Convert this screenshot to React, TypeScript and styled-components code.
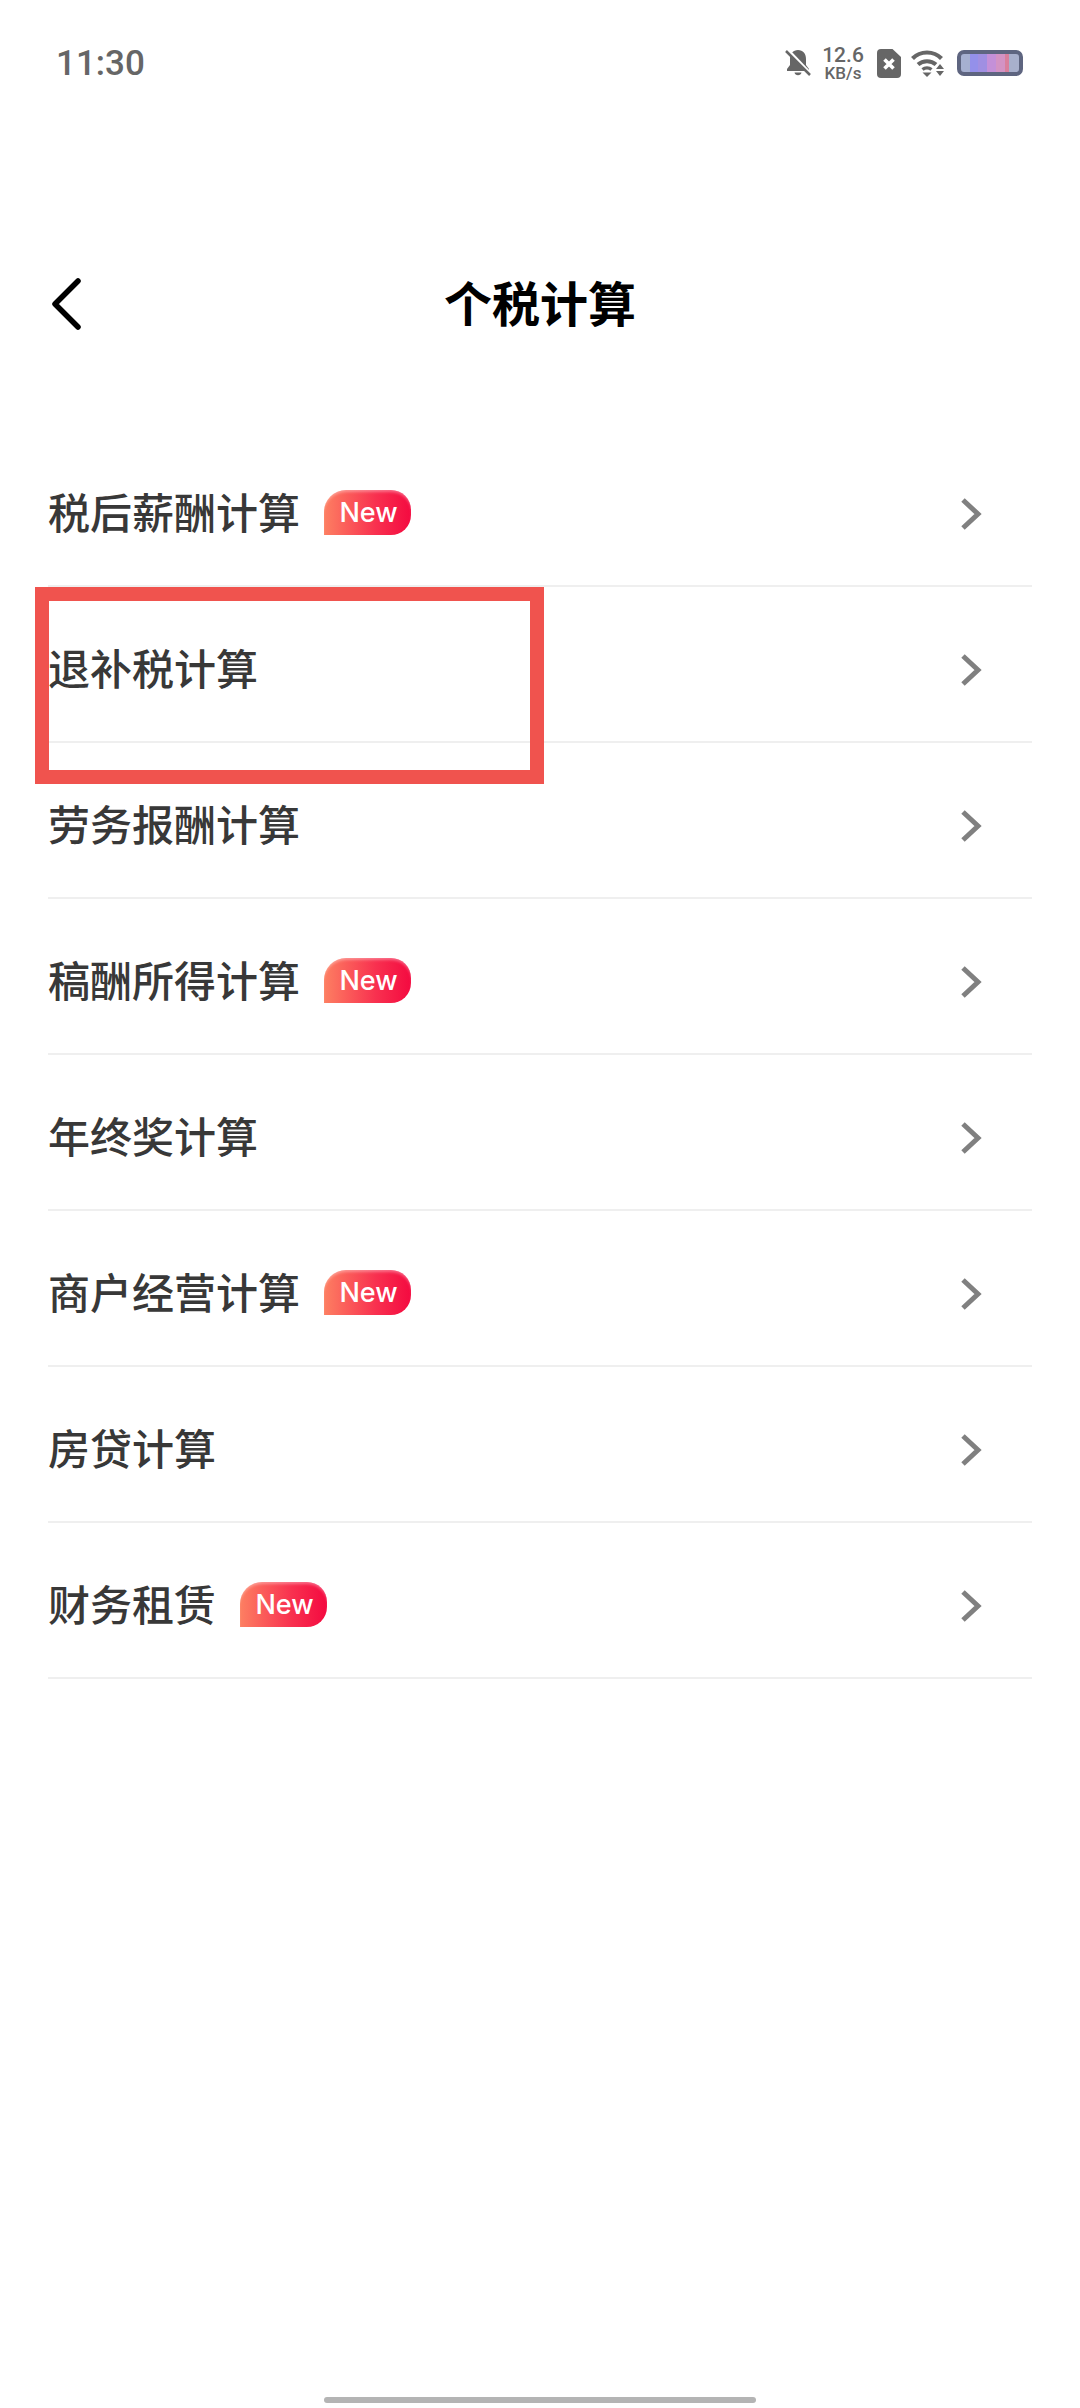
import styled, { createGlobalStyle } from 'styled-components';

const GlobalStyle = createGlobalStyle`
  html, body {
    margin: 0;
    padding: 0;
    background: #fff;
  }
  * {
    box-sizing: border-box;
  }
`;

const Page = styled.div`
  position: relative;
  width: 1080px;
  height: 2408px;
  overflow: hidden;
  background: #fff;
  font-family: 'Noto Sans CJK SC', 'Liberation Sans', sans-serif;
`;

const StatusBar = styled.div`
  height: 126px;
  padding: 0 57px 0 56px;
  display: flex;
  align-items: center;
  justify-content: space-between;
`;

const Time = styled.span`
  font-family: Roboto, sans-serif;
  font-weight: 500;
  font-size: 35px;
  color: #666;
`;

const StatusIcons = styled.div`
  display: flex;
  align-items: center;
  gap: 10px;
`;

const Speed = styled.div`
  display: flex;
  flex-direction: column;
  align-items: center;
  margin-right: 3px;
  font-family: Roboto, sans-serif;
  font-weight: 500;
  color: #666;
  width: 42px;
`;

const SpeedValue = styled.span`
  font-size: 21px;
  line-height: 19px;
`;

const SpeedUnit = styled.span`
  font-size: 17px;
  line-height: 16px;
  white-space: nowrap;
`;

const Battery = styled.div`
  width: 66px;
  height: 26px;
  margin-left: 2px;
  border: 4px solid #5e6580;
  border-radius: 7px;
  background: linear-gradient(
    90deg,
    #a6b0d0 0 15%,
    #9490ea 15% 30%,
    #a08fe2 30% 45%,
    #c490d8 45% 60%,
    #d393c4 60% 75%,
    #d97f9c 75% 83%,
    #a8b0cc 83% 100%
  );
`;

const NavBar = styled.div`
  position: relative;
  height: 116px;
  margin-top: 117px;
  display: flex;
  align-items: center;
  justify-content: center;
`;

const BackButton = styled.div`
  position: absolute;
  left: 50px;
  top: 50%;
  transform: translateY(-50%);
  margin-top: 3px;
  display: flex;
`;

const Title = styled.h1`
  margin: 0;
  font-size: 48px;
  line-height: 64px;
  font-weight: 700;
  color: #000;
`;

const List = styled.div`
  margin: 72px 48px 0;
`;

const Row = styled.div`
  height: 156px;
  padding: 6px 50px 0 0;
  display: flex;
  align-items: center;
  border-bottom: 2px solid #efefef;
`;

const RowLabel = styled.span`
  font-size: 42px;
  line-height: 56px;
  font-weight: 500;
  color: #383838;
`;

const NewBadge = styled.span`
  margin: 2px 0 0 24px;
  width: 87px;
  height: 45px;
  padding-left: 2px;
  display: flex;
  align-items: center;
  justify-content: center;
  border-radius: 22px 20px 20px 0;
  background: linear-gradient(90deg, #fd7f62 0%, #f8304f 60%, #f40a40 100%);
  color: #fff;
  font-family: Inter, sans-serif;
  font-size: 27px;
  font-weight: 500;
  box-shadow: inset 0 3px 3px -1px rgba(255, 255, 255, 0.35);
`;

const Chevron = styled.div`
  margin: 6px 0 0 auto;
  display: flex;
`;

const Highlight = styled.div`
  position: absolute;
  left: 35px;
  top: 587px;
  width: 509px;
  height: 197px;
  border: 14px solid #f0534e;
`;

const HomeIndicator = styled.div`
  position: absolute;
  left: 324px;
  bottom: 5px;
  width: 432px;
  height: 6px;
  border-radius: 3px;
  background: #b4b4b4;
`;

const items = [
  { label: '税后薪酬计算', isNew: true },
  { label: '退补税计算', isNew: false },
  { label: '劳务报酬计算', isNew: false },
  { label: '稿酬所得计算', isNew: true },
  { label: '年终奖计算', isNew: false },
  { label: '商户经营计算', isNew: true },
  { label: '房贷计算', isNew: false },
  { label: '财务租赁', isNew: true },
];

const BellOff = () => (
  <svg width="28" height="28" viewBox="0 0 26 28">
    <path
      d="M13 1c-5 0-8 3.500-8 9v6l-3 4v2h22v-2l-3-4v-6c0-5.500-3-9-8-9zM9.500 23.500a3.600 3.600 0 0 0 7 0z"
      fill="#666"
    />
    <path d="M2 0l24 25" stroke="#fff" strokeWidth="3" />
    <path d="M1 2l24 24" stroke="#666" strokeWidth="2.500" />
  </svg>
);

const SimError = () => (
  <svg width="24" height="29" viewBox="0 0 24 29">
    <path
      d="M4 0h11.500L24 8v17a4 4 0 0 1-4 4H4a4 4 0 0 1-4-4V4a4 4 0 0 1 4-4z"
      fill="#666"
    />
    <path d="M7.500 10.500l9 9M16.500 10.500l-9 9" stroke="#fff" strokeWidth="3.600" />
  </svg>
);

const Wifi = () => (
  <svg width="34" height="28" viewBox="0 0 34 28" fill="none">
    <path d="M1.500 9.500c8-8 21-8 29 0" stroke="#666" strokeWidth="4.200" />
    <path d="M7 15.500c5-4.500 13-4.500 18 0" stroke="#666" strokeWidth="4" />
    <path d="M11.500 20.500c2.500-2 6.500-2 9 0" stroke="#666" strokeWidth="3.400" />
    <path d="M11.500 23.500h9l-4.500 4.500z" fill="#666" />
    <path d="M29 15l4 5h-8zM25 22h8l-4 5z" fill="#666" />
  </svg>
);

const App = () => {
  return (
    <Page>
      <GlobalStyle />
      <StatusBar>
        <Time>11:30</Time>
        <StatusIcons>
          <BellOff />
          <Speed>
            <SpeedValue>12.6</SpeedValue>
            <SpeedUnit>KB/s</SpeedUnit>
          </Speed>
          <SimError />
          <Wifi />
          <Battery />
        </StatusIcons>
      </StatusBar>

      <NavBar>
        <BackButton>
          <svg width="32" height="52" viewBox="0 0 32 52" fill="none">
            <path
              d="M28 3L5 26l23 23"
              stroke="#000"
              strokeWidth="5.500"
              strokeLinecap="round"
              strokeLinejoin="round"
            />
          </svg>
        </BackButton>
        <Title>个税计算</Title>
      </NavBar>

      <List>
        {items.map((item) => (
          <Row key={item.label}>
            <RowLabel>{item.label}</RowLabel>
            {item.isNew && <NewBadge>New</NewBadge>}
            <Chevron>
              <svg width="22" height="34" viewBox="0 0 22 34" fill="none">
                <path d="M3 3l15 14L3 31" stroke="#808080" strokeWidth="5" />
              </svg>
            </Chevron>
          </Row>
        ))}
      </List>

      <Highlight />
      <HomeIndicator />
    </Page>
  );
};

export default App;
